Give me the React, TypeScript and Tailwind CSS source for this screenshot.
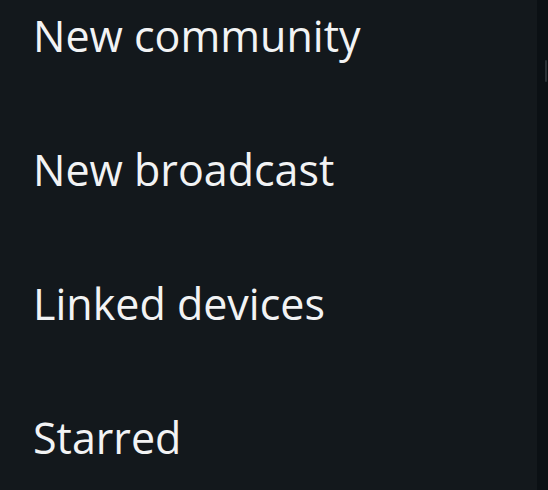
import React from "react";

const items = ["New community", "New broadcast", "Linked devices", "Starred"];

const App = () => {
  return (
    <div className="flex flex-row w-[548px] h-[490px] overflow-hidden bg-[#0b1014]">
      <div className="w-[537px] h-full bg-[#13181c] overflow-hidden">
        <div className="flex flex-col -mt-[32px]">
          {items.map((label) => (
            <div key={label} className="h-[134px] flex items-center pl-[33px]">
              <span
                className="text-[43px] leading-none font-[380] text-[#f2f3f4]"
                style={{ fontFamily: '"Open Sans", "Noto Sans", sans-serif' }}
              >
                {label}
              </span>
            </div>
          ))}
        </div>
      </div>
      <div className="flex-1 h-full relative">
        <div className="absolute left-[8px] top-[60px] w-[2px] h-[22px] bg-[#2a3035] rounded-full" />
      </div>
    </div>
  );
};

export default App;
